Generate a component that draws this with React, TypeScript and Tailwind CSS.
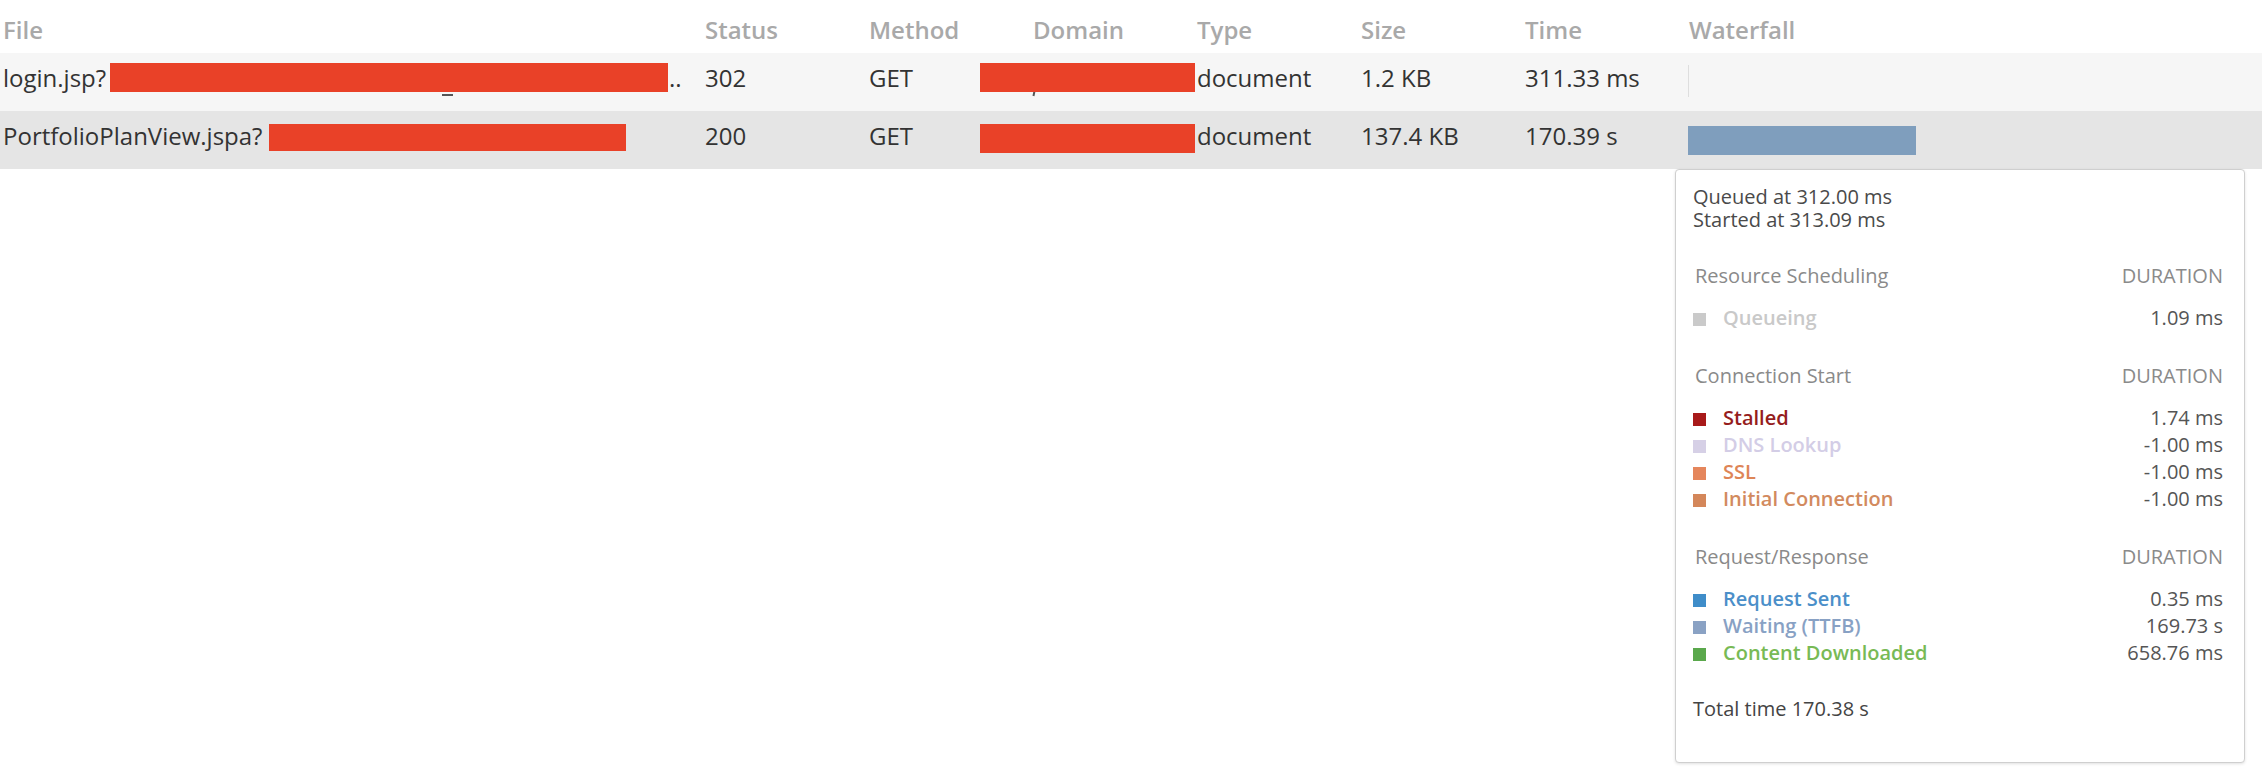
const columns = ["File", "Status", "Method", "Domain", "Type", "Size", "Time", "Waterfall"];

type Row = {
  file: string;
  status: string;
  method: string;
  type: string;
  size: string;
  time: string;
};

const rows: Row[] = [
  { file: "login.jsp?", status: "302", method: "GET", type: "document", size: "1.2 KB", time: "311.33 ms" },
  { file: "PortfolioPlanView.jspa?", status: "200", method: "GET", type: "document", size: "137.4 KB", time: "170.39 s" },
];

type Item = { label: string; value: string; square: string; text: string };
type Section = { title: string; items: Item[] };

const sections: Section[] = [
  {
    title: "Resource Scheduling",
    items: [{ label: "Queueing", value: "1.09 ms", square: "bg-[#cacaca]", text: "text-[#c9c9c9]" }],
  },
  {
    title: "Connection Start",
    items: [
      { label: "Stalled", value: "1.74 ms", square: "bg-[#a81a1a]", text: "text-[#951d1d]" },
      { label: "DNS Lookup", value: "-1.00 ms", square: "bg-[#d6d0e6]", text: "text-[#d3cde6]" },
      { label: "SSL", value: "-1.00 ms", square: "bg-[#e5865c]", text: "text-[#de8556]" },
      { label: "Initial Connection", value: "-1.00 ms", square: "bg-[#d4875a]", text: "text-[#d28a5e]" },
    ],
  },
  {
    title: "Request/Response",
    items: [
      { label: "Request Sent", value: "0.35 ms", square: "bg-[#3f8dc9]", text: "text-[#4b8fc9]" },
      { label: "Waiting (TTFB)", value: "169.73 s", square: "bg-[#8aa2c4]", text: "text-[#88a1c4]" },
      { label: "Content Downloaded", value: "658.76 ms", square: "bg-[#5aa84c]", text: "text-[#78ba55]" },
    ],
  },
];

const Redact = ({ className }: { className: string }) => (
  <div className={`absolute bg-[#e94128] ${className}`} />
);

const Timings = () => (
  <div className="absolute left-[1675px] top-[169px] w-[570px] h-[594px] rounded-[4px] border border-[#cfcfcf] bg-white pl-[17px] pr-[21px] pt-[15px] text-[20px] shadow-[0_1px_3px_rgba(0,0,0,0.12)]">
    <div className="leading-[23px] text-[#4a4a4a]">
      <p>Queued at 312.00 ms</p>
      <p>Started at 313.09 ms</p>
    </div>
    {sections.map((s) => (
      <div key={s.title} className="mt-[31px]">
        <div className="flex justify-between leading-[27px] text-[#8a8a8a]">
          <span className="pl-[2px]">{s.title}</span>
          <span>DURATION</span>
        </div>
        <div className="mt-[15px]">
          {s.items.map((it) => (
            <div key={it.label} className="flex items-center justify-between leading-[27px]">
              <div className="flex items-center">
                <span className={`mt-[4px] mr-[17px] h-[13px] w-[13px] ${it.square}`} />
                <span className={`font-semibold ${it.text}`}>{it.label}</span>
              </div>
              <span className="text-[#555]">{it.value}</span>
            </div>
          ))}
        </div>
      </div>
    ))}
    <p className="mt-[29px] leading-[27px] text-[#444]">Total time 170.38 s</p>
  </div>
);

export default function App() {
  return (
    <div
      className="relative h-[782px] w-[2262px] overflow-hidden bg-white text-[24px] text-[#333]"
      style={{ fontFamily: '"Open Sans", "Noto Sans", sans-serif' }}
    >
      <div className="grid h-[53px] grid-cols-[702px_164px_164px_164px_164px_164px_164px_1fr] font-semibold text-[#a9a9a9]">
        {columns.map((c) => (
          <div key={c} className="pl-[3px] pt-[14px] leading-[32px]">
            {c}
          </div>
        ))}
      </div>

      {rows.map((r, i) => (
        <div
          key={r.file}
          className={`relative grid h-[58px] grid-cols-[702px_164px_164px_164px_164px_164px_164px_1fr] ${
            i === 0 ? "bg-[#f6f6f6]" : "bg-[#e5e5e5]"
          }`}
        >
          <div className="pl-[3px] pt-[9px] leading-[32px]">{r.file}</div>
          <div className="pl-[3px] pt-[9px] leading-[32px]">{r.status}</div>
          <div className="pl-[3px] pt-[9px] leading-[32px]">{r.method}</div>
          <div className="pl-[3px] pt-[9px] leading-[32px]" />
          <div className="pl-[3px] pt-[9px] leading-[32px]">{r.type}</div>
          <div className="pl-[3px] pt-[9px] leading-[32px]">{r.size}</div>
          <div className="pl-[3px] pt-[9px] leading-[32px]">{r.time}</div>
          <div className="pl-[2px]">
            {i === 0 ? (
              <div className="mt-[12px] h-[32px] w-px bg-[#dedede]" />
            ) : (
              <div className="mt-[15px] h-[29px] w-[228px] bg-[#7f9ebd]" />
            )}
          </div>

          {i === 0 ? (
            <>
              <div className="absolute left-[442px] top-[41px] h-[2px] w-[11px] bg-[#555]" />
              <Redact className="left-[110px] top-[10px] h-[29px] w-[558px]" />
              <span className="absolute left-[669px] top-[9px] leading-[32px]">..</span>
              <div className="absolute left-[1033px] top-[38px] h-[5px] w-[2px] rotate-12 bg-[#555]" />
              <Redact className="left-[980px] top-[10px] h-[29px] w-[215px]" />
            </>
          ) : (
            <>
              <Redact className="left-[269px] top-[13px] h-[27px] w-[357px]" />
              <Redact className="left-[980px] top-[13px] h-[29px] w-[215px]" />
            </>
          )}
        </div>
      ))}

      <Timings />
    </div>
  );
}
